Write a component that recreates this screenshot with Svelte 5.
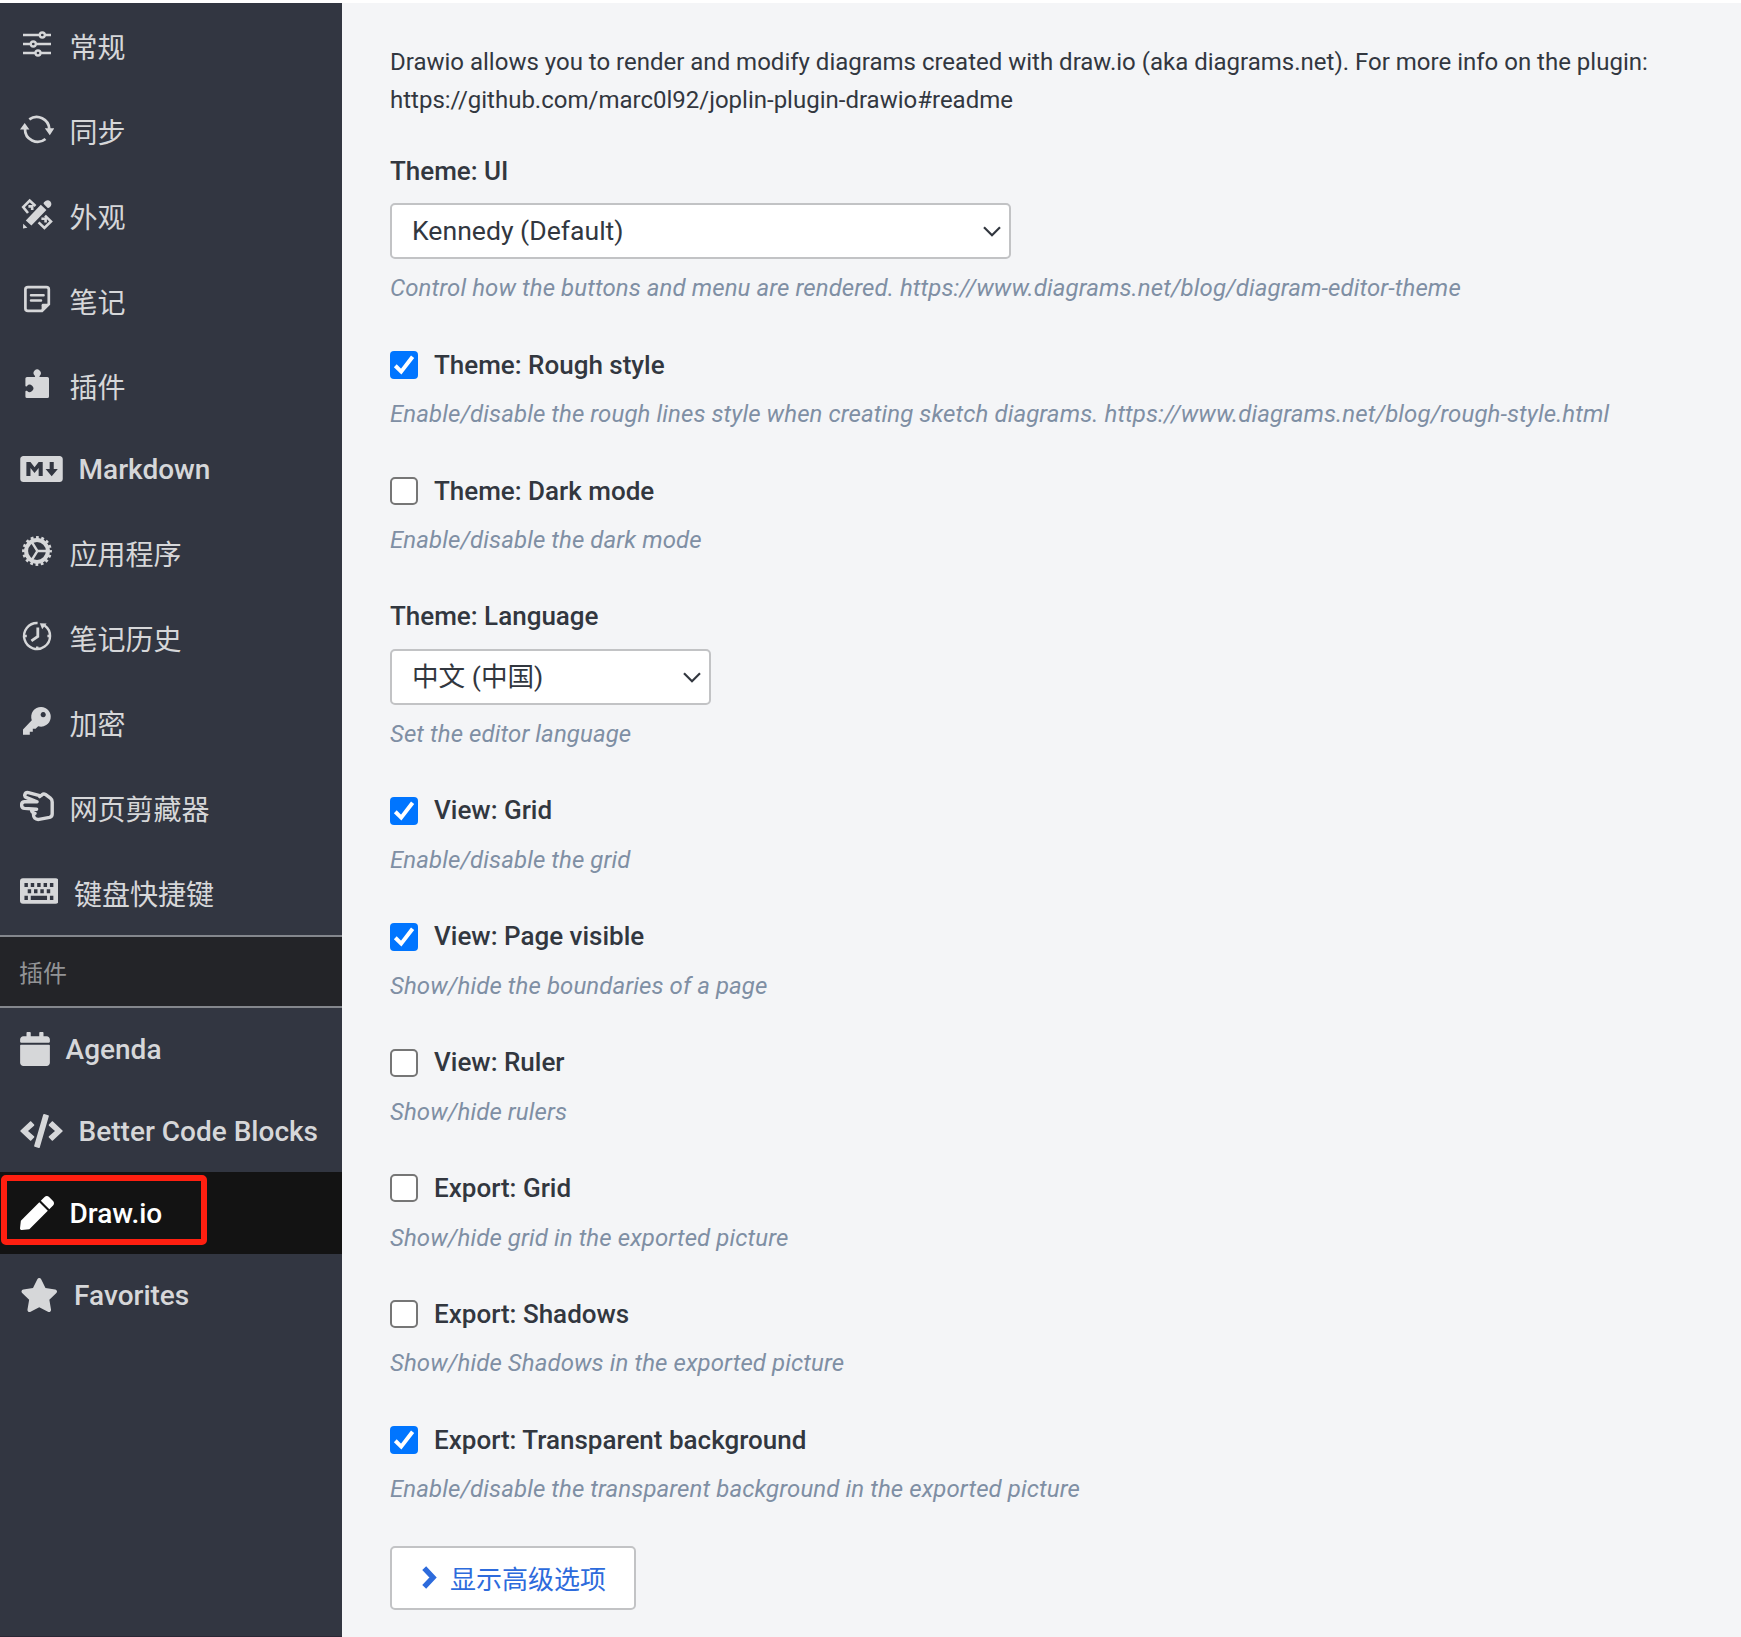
<script>
  const sections = [
    { icon: 'sliders', label: '常规', cjk: true },
    { icon: 'sync', label: '同步', cjk: true },
    { icon: 'appearance', label: '外观', cjk: true },
    { icon: 'note', label: '笔记', cjk: true },
    { icon: 'puzzle', label: '插件', cjk: true },
    { icon: 'markdown', label: 'Markdown' },
    { icon: 'gear', label: '应用程序', cjk: true },
    { icon: 'history', label: '笔记历史', cjk: true },
    { icon: 'key', label: '加密', cjk: true },
    { icon: 'hand', label: '网页剪藏器', cjk: true },
    { icon: 'keyboard', label: '键盘快捷键', cjk: true },
  ];

  const plugins = [
    { icon: 'calendar', label: 'Agenda' },
    { icon: 'code', label: 'Better Code Blocks' },
    { icon: 'pen', label: 'Draw.io', selected: true },
    { icon: 'star', label: 'Favorites' },
  ];

  const settings = [
    { type: 'select', label: 'Theme: UI', value: 'Kennedy (Default)', wide: true, help: 'Control how the buttons and menu are rendered. https://www.diagrams.net/blog/diagram-editor-theme' },
    { type: 'check', label: 'Theme: Rough style', on: true, help: 'Enable/disable the rough lines style when creating sketch diagrams. https://www.diagrams.net/blog/rough-style.html' },
    { type: 'check', label: 'Theme: Dark mode', on: false, help: 'Enable/disable the dark mode' },
    { type: 'select', label: 'Theme: Language', value: '中文 (中国)', help: 'Set the editor language' },
    { type: 'check', label: 'View: Grid', on: true, help: 'Enable/disable the grid' },
    { type: 'check', label: 'View: Page visible', on: true, help: 'Show/hide the boundaries of a page' },
    { type: 'check', label: 'View: Ruler', on: false, help: 'Show/hide rulers' },
    { type: 'check', label: 'Export: Grid', on: false, help: 'Show/hide grid in the exported picture' },
    { type: 'check', label: 'Export: Shadows', on: false, help: 'Show/hide Shadows in the exported picture' },
    { type: 'check', label: 'Export: Transparent background', on: true, help: 'Enable/disable the transparent background in the exported picture' },
  ];
</script>

{#snippet icon(name)}
  {#if name === 'sliders'}
    <svg class="ico" viewBox="0 0 34 34" fill="none" stroke="currentColor" stroke-width="2.3">
      <path d="M3 8H19.5M25 8H31M3 17H10.5M16 17H31M3 26H15M21 26H31" />
      <circle cx="22.3" cy="8" r="2.5" /><circle cx="13.3" cy="17" r="2.5" /><circle cx="18" cy="26" r="2.5" />
    </svg>
  {:else if name === 'sync'}
    <svg class="ico" viewBox="0 0 34 34">
      <path d="M9.3 7.4A12.6 12.6 0 0 1 29.3 17M5 17A12.6 12.6 0 0 0 25.5 27" fill="none" stroke="currentColor" stroke-width="2.7" />
      <path d="M24.8 16.2H34.4L29.8 23.2ZM0 17.5H9.4L4.7 11Z" fill="currentColor" />
    </svg>
  {:else if name === 'appearance'}
    <svg class="ico" viewBox="0 0 34 34">
      <path d="M5.8 23.6L20.8 7.8 26.4 13 11.4 28.6ZM3.2 26.8L7.4 30.8 3 31.4Z" fill="currentColor" />
      <path d="M24 5.2Q27.4 1.600 30.400 4.400 32.800 7.600 29.400 10.600 28.200 11.400 27.200 10.400L24 7.200Q23 6.200 24 5.200Z" fill="currentColor" />
      <path d="M8 16L3.200 10.200 9.700 3.600 15.500 9M8.400 9.400H12.200V13M18.600 25.400L24.400 31 31 24.400 25 18.600M21.400 21.800H25.600V25.400" fill="none" stroke="currentColor" stroke-width="2.6" />
    </svg>
  {:else if name === 'note'}
    <svg class="ico" viewBox="0 0 34 34">
      <path d="M8 5.200H26.400Q28.800 5.200 28.800 7.600V22.200L22 28.800H8Q5.400 28.800 5.400 26.400V7.600Q5.400 5.200 8 5.200Z" fill="none" stroke="currentColor" stroke-width="2.7" />
      <path d="M11 13.200H23.600M11 18.400H21" fill="none" stroke="currentColor" stroke-width="2.5" stroke-linecap="round" />
      <path d="M21.600 29.500V23.200Q21.600 21.800 23 21.800H29.500Z" fill="currentColor" />
    </svg>
  {:else if name === 'puzzle'}
    <svg class="ico" viewBox="0 0 34 34" fill="currentColor">
      <path d="M7 10H14.600C15.400 10 15.200 9.200 14.600 8.600A3.600 3.600 0 1 1 20 8.400C19.400 9.200 19.200 10 20 10H27.400Q29 10 29 11.600V29.400Q29 31 27.400 31H7Q5.400 31 5.400 29.400V24.400C5.400 23.600 6.400 23.400 7.200 24A3.600 3.600 0 1 0 7 19C6.400 19.800 5.400 19.600 5.400 18.800V11.600Q5.400 10 7 10Z" />
    </svg>
  {:else if name === 'markdown'}
    <svg class="ico w640" viewBox="0 0 640 512" fill="currentColor">
      <path d="M593.8 59.1H46.2C20.7 59.1 0 79.8 0 105.2v301.5c0 25.5 20.7 46.2 46.2 46.2h547.7c25.5 0 46.2-20.7 46.1-46.1V105.2c0-25.4-20.7-46.1-46.2-46.1zM338.5 360.6H277v-120l-61.5 76.9-61.5-76.9v120H92.3V151.4h61.5l61.5 76.9 61.5-76.9h61.5v209.2zm135.3 3.1L381.5 256H443V151.4h61.5V256H566z" />
    </svg>
  {:else if name === 'gear'}
    <svg class="ico" viewBox="0 0 34 34" fill="none" stroke="currentColor">
      <circle cx="17" cy="17" r="10.9" stroke-width="4" />
      <circle cx="17" cy="17" r="13.500" stroke-width="2.800" stroke-dasharray="2.800 2.501" stroke-dashoffset="1.400" />
      <path d="M17.400 17H27M17.400 17L12 8.400M17.400 17L12 25.600" stroke-width="2.400" />
    </svg>
  {:else if name === 'history'}
    <svg class="ico" viewBox="0 0 34 34">
      <path d="M17.600 4A13 13 0 1 0 24.600 6.400M4 17H6.800M27.400 17H30.200M17.200 27.400V30" fill="none" stroke="currentColor" stroke-width="2.400" />
      <path d="M17.800 8.400V17.400L11.400 21.800" fill="none" stroke="currentColor" stroke-width="2.800" />
      <path d="M19.800 4.200L26.600 4.600 22.200 10.200Z" fill="currentColor" />
    </svg>
  {:else if name === 'key'}
    <svg class="ico" viewBox="0 0 34 34" fill="currentColor" fill-rule="evenodd">
      <path d="M21.200 3A9.800 9.800 0 1 1 18.200 22.200L15.600 24.800H12.800V27.800H9.800V30.800H3V25.400L11.800 16.200A9.800 9.800 0 0 1 21.200 3ZM23.200 8.100A2.600 2.600 0 1 0 23.210 8.100Z" />
    </svg>
  {:else if name === 'hand'}
    <svg class="ico" viewBox="0 0 34 34" fill="none" stroke="currentColor" stroke-width="3.400" stroke-linejoin="round" stroke-linecap="round">
      <path d="M20.600 6.800L8.400 3.600C4.600 3 3.400 7.400 6.600 8.600L17 12.800H4.600C.6 12.800 .6 19 4.600 19.400L16.600 20.200M11.400 20.400C11.600 23 12.600 24 15 24.400M13.600 24.600C13 28.600 15.400 30.800 19 30.400L29.600 28.400Q32.200 27.600 32.200 25V13Q32.200 10.600 30.400 9.200L25.400 5.400Q23.600 4.400 22 5.800L19.600 7.600" />
    </svg>
  {:else if name === 'keyboard'}
    <svg class="ico w576" viewBox="0 0 39 34" fill="currentColor" fill-rule="evenodd">
      <path d="M3 4H36Q39 4 39 7V27Q39 30 36 30H3Q0 30 0 27V7Q0 4 3 4ZM4.500 9V13H8V9ZM10.900 9V13H14.400V9ZM17.400 9V13H20.900V9ZM23.900 9V13H27.400V9ZM30.300 9V13H33.800V9ZM7.800 15.300V19.300H11.300V15.300ZM14.200 15.300V19.300H17.700V15.300ZM20.600 15.300V19.300H24.100V15.300ZM27.100 15.300V19.300H30.600V15.300ZM4.500 21.700V26H8V21.700ZM10.900 21.700V26H27.400V21.700ZM30.300 21.700V26H33.800V21.700Z" />
    </svg>
  {:else if name === 'calendar'}
    <svg class="ico w448" viewBox="0 0 448 512" fill="currentColor">
      <path d="M12 192h424c6.600 0 12 5.400 12 12v260c0 26.500-21.500 48-48 48H48c-26.500 0-48-21.500-48-48V204c0-6.600 5.400-12 12-12zm436-44v-36c0-26.500-21.500-48-48-48h-48V12c0-6.600-5.400-12-12-12h-40c-6.600 0-12 5.400-12 12v52H160V12c0-6.600-5.400-12-12-12h-40c-6.600 0-12 5.400-12 12v52H48C21.500 64 0 85.500 0 112v36c0 6.600 5.400 12 12 12h424c6.600 0 12-5.400 12-12z" />
    </svg>
  {:else if name === 'code'}
    <svg class="ico w640" viewBox="0 0 640 512" fill="currentColor">
      <path d="M278.900 511.500l-61-17.700c-6.400-1.800-10-8.500-8.200-14.900L346.200 8.700c1.800-6.400 8.500-10 14.900-8.200l61 17.700c6.400 1.800 10 8.500 8.200 14.900L293.800 503.300c-1.900 6.400-8.500 10.100-14.900 8.200zm-114-112.200l43.500-46.400c4.600-4.900 4.300-12.700-.8-17.200L117 256l90.600-79.700c5.100-4.500 5.500-12.300.8-17.200l-43.500-46.400c-4.500-4.800-12.100-5.100-17-.5L3.800 247.200c-5.100 4.700-5.100 12.800 0 17.500l144.100 135.100c4.900 4.600 12.500 4.400 17-.5zm327.200.6l144.100-135.100c5.100-4.700 5.100-12.800 0-17.500L492.100 112.100c-4.800-4.500-12.400-4.300-17 .5L431.600 159c-4.600 4.900-4.300 12.700.8 17.200L523 256l-90.600 79.700c-5.100 4.500-5.500 12.300-.8 17.200l43.500 46.400c4.500 4.900 12.100 5.100 17 .6z" />
    </svg>
  {:else if name === 'pen'}
    <svg class="ico" viewBox="0 0 512 512" fill="currentColor">
      <path d="M290.740 93.240l128.020 128.020-277.990 277.990-114.140 12.600C11.350 513.540-1.560 500.620.14 485.340l12.700-114.220 277.900-277.880zm207.200-19.060l-60.110-60.110c-18.750-18.750-49.160-18.750-67.910 0l-56.550 56.550 128.020 128.020 56.550-56.550c18.750-18.760 18.750-49.160 0-67.910z" />
    </svg>
  {:else}
    <svg class="ico w576" viewBox="0 0 576 512" fill="currentColor">
      <path d="M259.300 17.800L194 150.200 47.900 171.500c-26.200 3.800-36.700 36.100-17.700 54.600l105.700 103-25 145.500c-4.500 26.300 23.200 46 46.400 33.700L288 439.600l130.700 68.700c23.200 12.200 50.900-7.400 46.400-33.700l-25-145.500 105.700-103c19-18.500 8.500-50.800-17.700-54.600L382 150.200 316.700 17.800c-11.700-23.600-45.600-23.900-57.400 0z" />
    </svg>
  {/if}
{/snippet}

<div class="window">
  <nav class="sidebar">
    {#each sections as item}
      <div class="item" class:cjk={item.cjk}>
        {@render icon(item.icon)}
        <span class="name">{item.label}</span>
      </div>
    {/each}
    <div class="divider">插件</div>
    {#each plugins as item}
      <div class="item" class:selected={item.selected}>
        {@render icon(item.icon)}
        <span class="name">{item.label}</span>
        {#if item.selected}<i class="marker"></i>{/if}
      </div>
    {/each}
  </nav>

  <main class="content">
    <p class="intro">
      Drawio allows you to render and modify diagrams created with draw.io (aka diagrams.net). For more info on the plugin:<br />
      https://github.com/marc0l92/joplin-plugin-drawio#readme
    </p>

    {#each settings as s}
      <section class="setting" class:with-select={s.type === 'select'}>
        {#if s.type === 'select'}
          <div class="label">{s.label}</div>
          <div class="select" class:wide={s.wide}>
            <span class="value">{s.value}</span>
            <svg class="caret" viewBox="0 0 18 11" fill="none" stroke="#32373f" stroke-width="2.2"><path d="M1 1.200L9 9.200 17 1.200" /></svg>
          </div>
        {:else}
          <div class="check-row">
            <span class="box" class:on={s.on}>
              {#if s.on}
                <svg viewBox="0 0 28 28" fill="none" stroke="#fff" stroke-width="4"><path d="M5.300 14.800L11.200 20.600 22.600 5.800" /></svg>
              {/if}
            </span>
            <div class="label">{s.label}</div>
          </div>
        {/if}
        <div class="help">{s.help}</div>
      </section>
    {/each}

    <button class="advanced">
      <svg viewBox="0 0 15 23" fill="none" stroke="currentColor" stroke-width="5.400"><path d="M2.200 2.200L11 11.500 2.200 20.800" /></svg>
      <span>显示高级选项</span>
    </button>
  </main>
</div>

<style>
  :global(body) {
    margin: 0;
    background: #fff;
  }

  .window {
    box-sizing: border-box;
    height: 1637px;
    padding-top: 3px;
    display: flex;
    overflow: hidden;
    font-family: Roboto, 'Noto Sans CJK SC', sans-serif;
    color: #32373f;
  }

  .sidebar {
    box-sizing: border-box;
    width: 342px;
    flex: none;
    background: #323641;
    border-bottom: 1px solid #2b2735;
  }

  .item {
    position: relative;
    box-sizing: border-box;
    height: 82px;
    padding-left: 19.600px;
    display: flex;
    align-items: center;
    gap: 16px;
    color: #d6d7d9;
    font-size: 28px;
    font-weight: 500;
    white-space: nowrap;
  }

  .item.cjk {
    height: 85px;
    font-weight: 400;
  }

  .item.cjk .ico {
    margin-bottom: 3px;
  }

  .item.selected {
    background: #131313;
    color: #fff;
  }

  .ico {
    flex: none;
    width: 34px;
    height: 34px;
  }

  .w448 { width: 30px; }
  .w576 { width: 38.500px; }
  .w640 { width: 43px; }

  .marker {
    position: absolute;
    box-sizing: border-box;
    left: 1px;
    top: 3px;
    width: 206px;
    height: 70px;
    border: 6px solid #ff1f10;
    border-radius: 5px;
  }

  .divider {
    box-sizing: border-box;
    height: 73px;
    padding: 0 0 1px 19px;
    display: flex;
    align-items: center;
    border-top: 2px solid #84878d;
    border-bottom: 2px solid #84878d;
    background: #232428;
    color: #929396;
    font-size: 24px;
  }

  .content {
    flex: 1;
    padding: 40px 48px 0;
    background: #f4f5f7;
  }

  .intro {
    margin: 0 0 31.700px;
    font-size: 24px;
    line-height: 38px;
    white-space: nowrap;
  }

  .setting {
    margin-bottom: 36.850px;
  }

  .setting.with-select {
    margin-bottom: 37.450px;
  }

  .label {
    font-size: 26px;
    font-weight: 500;
    line-height: 41px;
  }

  .check-row {
    display: flex;
    align-items: center;
    gap: 16px;
  }

  .help {
    margin-top: 9.600px;
    font-size: 24px;
    font-style: italic;
    line-height: 38.400px;
    letter-spacing: 0.096px;
    color: #7f8fa4;
    white-space: nowrap;
  }

  .select {
    box-sizing: border-box;
    width: 321px;
    height: 56px;
    margin-top: 11.600px;
    padding: 0 8px 0 20px;
    display: flex;
    align-items: center;
    justify-content: space-between;
    border: 2px solid #c2c3c5;
    border-radius: 5px;
    background: #fff;
    font-size: 26.600px;
  }

  .select.wide {
    width: 621px;
  }

  .value {
    line-height: 52px;
    height: 52px;
  }

  .caret {
    width: 18px;
    height: 11px;
  }

  .box {
    box-sizing: border-box;
    width: 28px;
    height: 28px;
    border: 2px solid #767676;
    border-radius: 5px;
    background: #fff;
  }

  .box.on {
    border: 0;
    border-radius: 4px;
    background: #0075ff;
  }

  .box svg {
    display: block;
    width: 28px;
    height: 28px;
  }

  .advanced {
    box-sizing: border-box;
    width: 246px;
    height: 64px;
    margin-top: 37.500px;
    padding: 0 0 2px 30px;
    display: flex;
    align-items: center;
    gap: 13px;
    border: 2px solid #c2c3c5;
    border-radius: 5px;
    background: #fff;
    color: #2d6bdc;
    font-family: inherit;
    font-size: 26px;
  }

  .advanced svg {
    width: 15px;
    height: 23px;
  }
</style>
